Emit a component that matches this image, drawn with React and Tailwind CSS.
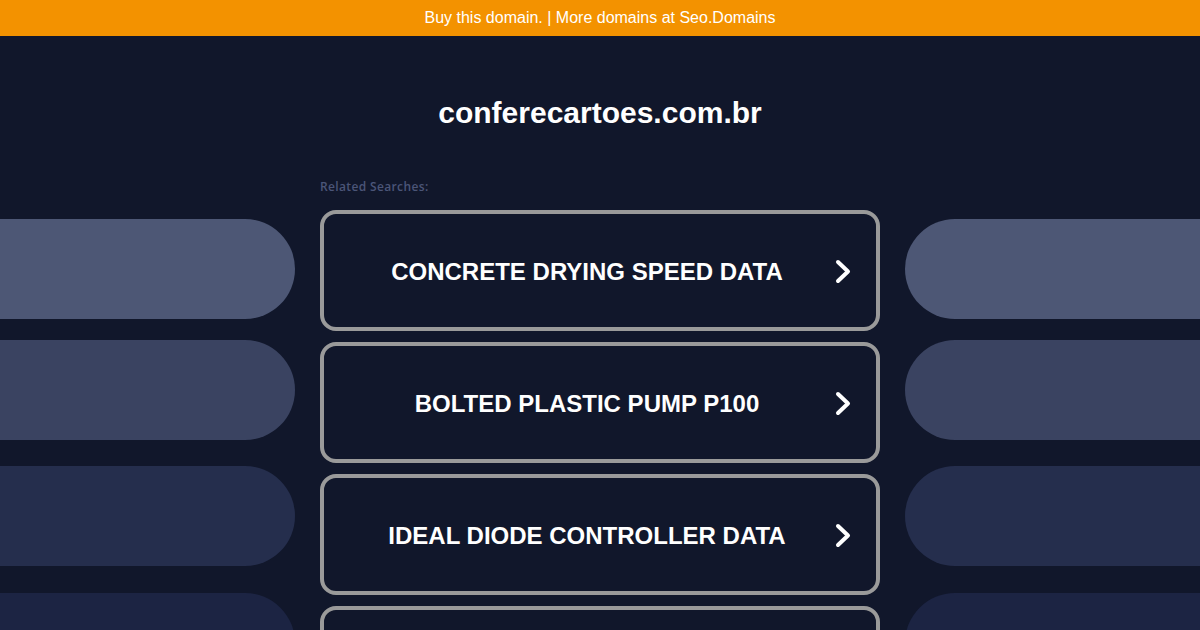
const SEARCHES = [
  'CONCRETE DRYING SPEED DATA',
  'BOLTED PLASTIC PUMP P100',
  'IDEAL DIODE CONTROLLER DATA',
  'INDUSTRIAL SENSOR SUPPLIERS',
]

const PILLS = [
  { color: 'bg-[#4d5775]', mt: 'mt-0' },
  { color: 'bg-[#3a4361]', mt: 'mt-[21px]' },
  { color: 'bg-[#252e4d]', mt: 'mt-[26px]' },
  { color: 'bg-[#1c2443]', mt: 'mt-[27px]' },
]

function Chevron() {
  return (
    <svg width="16" height="25" viewBox="0 0 16 25" className="shrink-0">
      <polyline points="3,3 13,12.5 3,22" fill="none" stroke="white" strokeWidth="4"
                strokeLinecap="round" strokeLinejoin="round" />
    </svg>
  )
}

export default function App() {
  return (
    <div className="w-[1200px] h-[630px] overflow-hidden bg-[#11172b] font-['Liberation_Sans',Arial,sans-serif]">

      {/* top banner */}
      <div className="h-[36px] bg-[#f39200] flex items-center justify-center text-white text-[16px]">
        Buy this domain. | More domains at Seo.Domains
      </div>

      {/* domain title */}
      <h1 className="mt-[59px] text-center text-white text-[30px] leading-[36px] font-bold">
        conferecartoes.com.br
      </h1>

      <div className="mt-[48px] flex">
        {/* left pills */}
        <div className="w-[295px] pt-[40px] shrink-0">
          {PILLS.map((p, i) => (
            <div key={i} className={`h-[100px] rounded-r-full ${p.color} ${p.mt}`} />
          ))}
        </div>

        {/* related searches */}
        <div className="w-[560px] ml-[25px] shrink-0">
          <p className="text-[12px] leading-[16px] font-semibold tracking-[0.03em] text-[#4b5578] font-['Open_Sans',sans-serif]">
            Related Searches:
          </p>
          <div className="mt-[15px] flex flex-col gap-[11px]">
            {SEARCHES.map(s => (
              <div key={s}
                   className="h-[121px] border-4 border-[#9a9a9a] rounded-[16px] flex items-center">
                <span className="flex-1 pl-[15px] pt-[2px] text-center text-white text-[24px] font-bold">{s}</span>
                <div className="mr-[25px] pt-[1px]"><Chevron /></div>
              </div>
            ))}
          </div>
        </div>

        {/* right pills */}
        <div className="flex-1 ml-[25px] pt-[40px]">
          {PILLS.map((p, i) => (
            <div key={i} className={`h-[100px] rounded-l-full ${p.color} ${p.mt}`} />
          ))}
        </div>
      </div>
    </div>
  )
}
